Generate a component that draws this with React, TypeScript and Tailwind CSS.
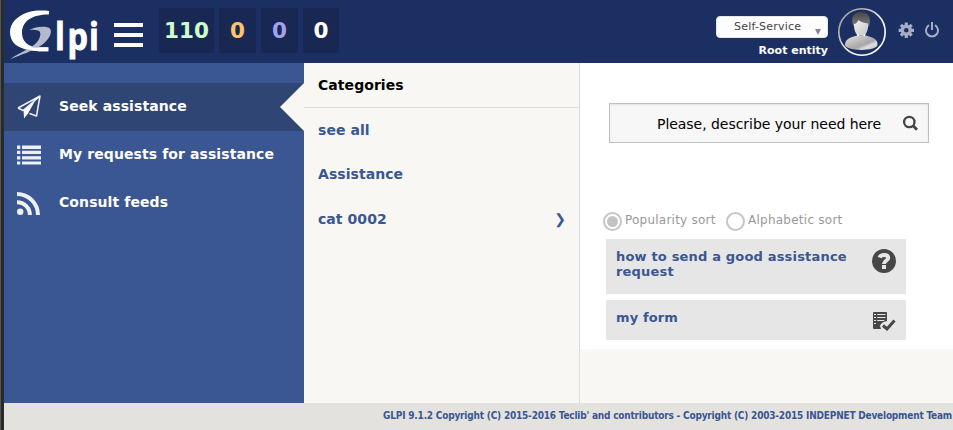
import React from "react";

function Logo() {
  return (
    <svg width="96" height="54" viewBox="6 9 96 54" className="ml-[2px] shrink-0 overflow-visible">
      <path
        d="M49 11C38 9.800 26 11 18 17.500C9 24 8 34 13 42C18 49.500 34 52 48 51.200V47.500H41C28 48 22 41 22 33C22 21 32 14.500 49 14.500Z"
        fill="#fff"
      />
      <path
        d="M29 30C35 26.500 47 25.500 50 28.500C53 33 48 41 41 45.500C31 52 22 54 10 59.500C21 51 31 49.500 37.500 41.500C41 37 41.500 31.500 38 30.500C35 29.500 32 29.800 29 30Z"
        fill="#b4bacd"
      />
      <path d="M29 46.500Q36 48.500 40 47.300H48.500V51.200C40 51.500 33 51 27 49Z" fill="#fff" />
      <text
        transform="scale(.85 1)"
        x="64.600 79.300 104.600"
        y="50"
        fill="#fff"
        stroke="#fff"
        strokeWidth=".9"
        fontFamily="'Open Sans', sans-serif"
        fontWeight="700"
        fontSize="38"
      >
        lpi
      </text>
    </svg>
  );
}

function Avatar() {
  return (
    <svg width="48" height="48" viewBox="0 0 48 48" className="ml-[10px] mt-[8px] shrink-0">
      <defs>
        <linearGradient id="ring" x1="0" y1="0" x2="1" y2="1">
          <stop offset="0" stopColor="#888" />
          <stop offset=".65" stopColor="#fff" />
        </linearGradient>
        <linearGradient id="hair" x1="0" y1="0" x2="0" y2="1">
          <stop offset="0" stopColor="#444" />
          <stop offset="1" stopColor="#888" />
        </linearGradient>
        <linearGradient id="torso" x1="0" y1="0" x2="1" y2="1">
          <stop offset="0" stopColor="#e4e4e4" />
          <stop offset=".6" stopColor="#a6a6a6" />
          <stop offset=".75" stopColor="#e0e0e0" />
          <stop offset="1" stopColor="#b0b0b0" />
        </linearGradient>
        <linearGradient id="face" x1="0" y1="0" x2="1" y2="1">
          <stop offset="0" stopColor="#f4f4f4" />
          <stop offset="1" stopColor="#c4c4c4" />
        </linearGradient>
      </defs>
      <circle cx="24" cy="24" r="23.200" fill="none" stroke="url(#ring)" strokeWidth="1.600" />
      <path d="M7 37C7 31 12 29.500 19 27.500H28C35 29.500 40 31 39.500 37C38 43.500 9 43.500 7 37Z" fill="url(#torso)" />
      <path d="M15 17C12 8 17 4 23 4C30 4 33 9 31.500 17L29.500 20H17Z" fill="url(#hair)" />
      <path d="M16 16C18 16 19.500 14 20.500 12C22 14 26 15 30 15.500C30.500 21 29 25 26.500 27H19.500C17 25 16 21 16 16Z" fill="url(#face)" />
      <path d="M18.500 25L19.500 28.500L23.200 26.500L26.500 28.500L28 25C25 28 21 28 18.500 25Z" fill="#fff" />
    </svg>
  );
}

function PlaneIcon() {
  return (
    <svg width="24" height="24" viewBox="0 0 24 24" fill="none">
      <path d="M1 13L23 1L19.500 21L12.500 18.500M1 13L6 15.500L22 2" stroke="#eef1f5" strokeWidth="1.500" strokeLinejoin="round" />
      <path d="M18 6L6.500 15.500L7 23.500L11 18.500Z" fill="#fff" />
    </svg>
  );
}

function ListIcon() {
  return (
    <svg width="24" height="20" viewBox="0 0 24 20" fill="#edf0f4">
      <path d="M0 .5h3.300v3.500H0zM5 .5h19v3.500H5zM0 5.800h3.300v3.200H0zM5 5.800h19v3.200H5zM0 11.300h3.300v3.200H0zM5 11.300h19v3.200H5zM0 16.500h3.300v3H0zM5 16.500h19v3H5z" />
    </svg>
  );
}

function FeedIcon() {
  return (
    <svg width="24" height="24" viewBox="0 0 24 24" fill="none" stroke="#edf0f4">
      <circle cx="3.200" cy="20.800" r="3.200" fill="#edf0f4" stroke="none" />
      <path d="M0 11.200A12.800 12.800 0 0 1 12.900 24M0 3A21 21 0 0 1 21 24" strokeWidth="4" />
    </svg>
  );
}

function GearIcon() {
  return (
    <svg width="16" height="16" viewBox="0 0 16 16" className="ml-[12px] mt-[22px] shrink-0">
      <circle cx="8.300" cy="8.300" r="4" fill="none" stroke="#a5adc6" strokeWidth="3.400" />
      <g stroke="#a5adc6" strokeWidth="3.200">
        <path d="M8.300 .6V4M8.300 12.600V16M.6 8.300H4M12.600 8.300H16M2.900 2.900L5.200 5.200M11.400 11.400L13.700 13.700M2.900 13.700L5.200 11.400M11.400 5.200L13.700 2.900" />
      </g>
    </svg>
  );
}

function PowerIcon() {
  return (
    <svg width="14" height="16" viewBox="0 0 14 16" className="ml-[11px] mt-[22px] shrink-0" fill="none" stroke="#a5adc6" strokeWidth="2">
      <path d="M4 3.200A6 6 0 1 0 10 3.200M7 0V8" />
    </svg>
  );
}

const counters = [
  { n: "110", box: "w-[55px]", color: "text-[#ccffcc]" },
  { n: "0", box: "w-[37px]", color: "text-[#ffc36b]" },
  { n: "0", box: "w-[37px]", color: "text-[#a3a0ee]" },
  { n: "0", box: "w-[36px]", color: "text-white" },
];

const menu = [
  { label: "Seek assistance", icon: <PlaneIcon />, bg: "bg-[#2f4574]", active: true },
  { label: "My requests for assistance", icon: <ListIcon />, bg: "", active: false },
  { label: "Consult feeds", icon: <FeedIcon />, bg: "", active: false },
];

function Header() {
  return (
    <header className="flex h-[63px] items-start bg-[#1c2f62]">
      <div className="mt-[9px] flex h-[54px]">
        <Logo />
      </div>
      <div className="ml-[12px] mt-[23px] flex w-[29px] flex-col gap-[6px]">
        <span className="h-[4px] bg-white" />
        <span className="h-[4px] bg-white" />
        <span className="h-[4px] bg-white" />
      </div>
      <div className="ml-[16px] mt-[8px] flex gap-[5px]">
        {counters.map((c, i) => (
          <div key={i} className={`flex h-[45px] items-center justify-center bg-[#182853] pt-[1px] text-[21.500px] leading-[24px] font-bold ${c.box} ${c.color}`}>
            {c.n}
          </div>
        ))}
      </div>
      <div className="ml-auto mt-[16px] flex w-[112px] flex-col items-end">
        <div className="flex h-[22px] w-full items-center rounded-[4px] border border-[#e4e6ea] bg-[#fdfdfd] pl-[17px] pr-[6px] text-[11px] text-[#444]">
          <span className="pt-[1px] tracking-[0.200px]">Self-Service</span>
          <span className="ml-auto mt-[9px] h-0 w-0 border-x-[3.500px] border-t-[6px] border-x-transparent border-t-[#888]" />
        </div>
        <span className="mt-[6px] text-[11px] leading-[14px] font-bold whitespace-nowrap text-white">Root entity</span>
      </div>
      <Avatar />
      <GearIcon />
      <PowerIcon />
      <div className="w-[14px] shrink-0" />
    </header>
  );
}

function Sidebar() {
  return (
    <nav className="w-[300px] bg-[#3a5693] pt-[20px]">
      {menu.map((m) => (
        <div key={m.label} className={`flex h-[48px] items-center pl-[13px] ${m.bg}`}>
          <span className="w-[42px]">{m.icon}</span>
          <span className="pb-[2px] text-[14px] font-bold tracking-[0.09px] whitespace-nowrap text-white">{m.label}</span>
          {m.active && (
            <svg width="24" height="48" viewBox="0 0 24 48" className="ml-auto">
              <path d="M24 0L0 24L24 48Z" fill="#f8f7f3" />
            </svg>
          )}
        </div>
      ))}
    </nav>
  );
}

function Categories() {
  return (
    <section className="w-[276px] border-r border-[#dcdcdc] text-[14px] font-bold tracking-[0.06px] text-[#3a5693]">
      <div className="flex h-[45px] items-center border-b border-[#dcdcdc] pl-[14px] text-black">Categories</div>
      <div className="flex h-[44px] items-center pl-[14px]">see all</div>
      <div className="flex h-[45px] items-center pl-[14px]">Assistance</div>
      <div className="flex h-[44px] items-center justify-between pl-[14px] pr-[13px]">
        <span>cat 0002</span>
        <span className="pt-[1px]">❯</span>
      </div>
    </section>
  );
}

function Radio({ checked }: { checked: boolean }) {
  return (
    <span className="flex h-[19px] w-[19px] items-center justify-center rounded-full border-2 border-[#c6c6c6] bg-white">
      {checked && <span className="h-[11px] w-[11px] rounded-full bg-[#c3c3c3]" />}
    </span>
  );
}

function Forms() {
  return (
    <section className="h-[286px] flex-1 bg-white pl-[23px]">
      <div className="ml-[6px] mt-[40px] flex h-[40px] w-[320px] items-center border border-[#bfbfbf] bg-[#f7f7f7] pl-[47px] shadow-[inset_0_1px_2px_#e2e2e2]">
        <span className="pt-[2px] text-[14px] tracking-[-0.040px] whitespace-nowrap text-black">Please, describe your need here</span>
        <svg width="16" height="16" viewBox="0 0 16 16" className="ml-auto mr-[10px]" fill="none" stroke="#444">
          <circle cx="7.300" cy="7" r="5.200" strokeWidth="2.300" />
          <path d="M10.900 10.600L15 14.700" strokeWidth="2.800" />
        </svg>
      </div>
      <div className="mt-[69px] flex h-[19px] text-[12px] leading-[16px] text-[#999]">
        <Radio checked />
        <span className="ml-[3px] w-[101px] tracking-[0.230px] whitespace-nowrap">Popularity sort</span>
        <Radio checked={false} />
        <span className="ml-[3px] tracking-[0.250px] whitespace-nowrap">Alphabetic sort</span>
      </div>
      <div className="ml-[3px] mt-[8px] flex h-[55px] w-[300px] justify-between bg-[#e6e6e6] pl-[10px] pr-[10px] pt-[10px] text-[13px] leading-[15px] font-bold tracking-[0.180px] text-[#3a5693]">
        <span className="w-[240px]">how to send a good assistance request</span>
        <svg width="24" height="24" viewBox="0 0 24 24">
          <circle cx="12" cy="12" r="12" fill="#474747" />
          <path d="M7.500 8.500C8.500 5.500 15.700 4.500 16.200 8.700C16.500 11.500 12 11.500 12 15" fill="none" stroke="#e6e6e6" strokeWidth="4" />
          <path d="M10 16h4v4h-4z" fill="#e6e6e6" />
        </svg>
      </div>
      <div className="ml-[3px] mt-[6px] flex h-[40px] w-[300px] justify-between bg-[#e6e6e6] pl-[10px] pr-[10px] pt-[10px] text-[13px] leading-[15px] font-bold tracking-[0.120px] text-[#3a5693]">
        <span>my form</span>
        <svg width="24" height="22" viewBox="0 0 24 22">
          <path d="M2 2h12q1 0 1 1v8q-6 1-7 5l1 3H2q-1 0-1-1V3q0-1 1-1z" fill="#474747" />
          <path d="M2 4.500h2M2 7.500h2M2 10.500h2M2 13.500h2M5.200 4.500h8.300M5.200 7.500h8.300M5.200 10.500h7" stroke="#e6e6e6" strokeWidth="1.200" />
          <path d="M11 15.500L15 19L22.500 10.500" fill="none" stroke="#474747" strokeWidth="3" />
        </svg>
      </div>
    </section>
  );
}

export default function App() {
  return (
    <div className="flex h-[430px] w-[953px] overflow-hidden bg-[#f8f7f3] font-['DejaVu_Sans',sans-serif]">
      <div className="w-[4px] shrink-0 border-l border-[#555] bg-[#272b2a]" />
      <div className="flex w-[949px] flex-col">
        <Header />
        <main className="flex h-[340px]">
          <Sidebar />
          <Categories />
          <Forms />
        </main>
        <footer className="flex h-[27px] items-center justify-end bg-[#e3e2de] pb-[2px] pr-[1px] font-['DejaVu_Sans_Condensed','DejaVu_Sans',sans-serif] text-[10px] font-bold tracking-[-0.200px] whitespace-nowrap text-[#3a5693]">
          GLPI 9.1.2 Copyright (C) 2015-2016 Teclib' and contributors - Copyright (C) 2003-2015 INDEPNET Development Team
        </footer>
      </div>
    </div>
  );
}
